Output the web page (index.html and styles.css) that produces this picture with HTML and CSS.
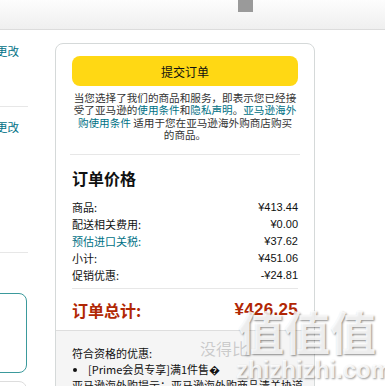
FILE: index.html
```html
<!DOCTYPE html>
<html lang="zh-CN">
<head>
    <meta charset="UTF-8">
    <meta name="viewport" content="width=device-width, initial-scale=1.0">
    <title>提交订单</title>
    <link rel="stylesheet" href="styles.css">
</head>
<body>

    <!-- 顶部栏 -->
    <div class="topbar">
        <div class="top-block"></div>
    </div>

    <div class="page">
        <!-- 左侧 (被裁切的地址/支付区域) -->
        <div class="side">
            <div class="side-inner">
                <div class="side-sec first">
                    <a class="change" href="#">更改</a>
                </div>
                <div class="side-sec second">
                    <a class="change" href="#">更改</a>
                </div>
                <div class="opt selected"></div>
                <div class="opt"></div>
            </div>
        </div>

        <!-- 订单摘要 -->
        <div class="summary">
            <div class="summary-top">
                <button class="submit-btn">提交订单</button>
                <p class="terms">
                    当您选择了我们的商品和服务，即表示您已经接<br>
                    受了亚马逊的<a href="#">使用条件</a>和<a href="#">隐私声明</a>。<a href="#">亚马逊海外<br>
                    购使用条件</a> 适用于您在亚马逊海外购商店购买<br>
                    的商品。
                </p>

                <h2 class="price-title">订单价格</h2>

                <div class="rows">
                    <div class="row"><span>商品:</span><span class="num">¥413.44</span></div>
                    <div class="row"><span>配送相关费用:</span><span class="num">¥0.00</span></div>
                    <div class="row"><a href="#">预估进口关税:</a><span class="num">¥37.62</span></div>
                    <div class="row"><span>小计:</span><span class="num">¥451.06</span></div>
                    <div class="row"><span>促销优惠:</span><span class="num">-¥24.81</span></div>
                </div>

                <div class="total">
                    <span>订单总计:</span>
                    <span class="total-num">¥426.25</span>
                </div>
            </div>

            <div class="summary-bottom">
                <div class="promo-title">符合资格的优惠:</div>
                <ul class="promo-list">
                    <li>[Prime会员专享]满1件售�</li>
                </ul>
                <div class="promo-note">亚马逊海外购提示：亚马逊海外购商品清关协道</div>
            </div>
        </div>
    </div>

    <!-- 水印 -->
    <div class="watermark">
        <div class="wm-big">值值值</div>
        <div class="wm-site">没得比</div>
        <div class="wm-url">zhizhizhi.com</div>
    </div>

</body>
</html>
```

FILE: styles.css
```css
body, html {
    margin: 0;
    padding: 0;
    height: 100%;
    background: #fff;
    overflow: hidden;
    font-family: "Liberation Sans", "Noto Sans CJK SC", sans-serif;
    color: #0f1111;
}

a {
    color: #007185;
    text-decoration: none;
}

/* 顶部栏 */
.topbar {
    height: 29px;
    background: linear-gradient(#fdfdfd, #efefef);
    border-bottom: 1px solid #dcdcdc;
}

.top-block {
    width: 15px;
    height: 12px;
    margin-left: 238px;
    background: #9a9a9a;
}

.page {
    display: flex;
    align-items: flex-start;
}

/* 左侧 */
.side {
    width: 28px;
    overflow: hidden;
    flex-shrink: 0;
}

.side-inner {
    width: 240px;
    margin-left: -212px;
}

.side-sec {
    border-bottom: 1px solid #e7e7e7;
    text-align: right;
    padding-right: 9px;
}

.side-sec.first {
    padding-top: 14px;
    height: 62px;
}

.side-sec.second {
    padding-top: 13px;
    height: 132px;
}

.change {
    display: block;
    font-size: 11.5px;
    line-height: 16px;
}

.opt {
    height: 78px;
    border: 1px solid #dddddd;
    border-radius: 8px;
    margin-right: 1px;
    margin-top: 8px;
}

.opt.selected {
    margin-top: 40px;
    border-color: #3b9a9c;
}

/* 订单摘要卡片 */
.summary {
    width: 258px;
    margin-top: 13px;
    margin-left: 27px;
    border: 1px solid #d5d9d9;
    border-radius: 8px;
    overflow: hidden;
    flex-shrink: 0;
}

.summary-top {
    padding: 12px 16px 9px;
}

.submit-btn {
    display: block;
    width: 100%;
    height: 30px;
    border: none;
    border-radius: 8px;
    background: #ffd814;
    font-family: "Noto Sans CJK SC", sans-serif;
    font-size: 12px;
    color: #0f1111;
    padding: 0;
}

.terms {
    margin: 6px -2px 0;
    text-align: center;
    font-family: "Noto Sans CJK SC", sans-serif;
    font-size: 10.6px;
    line-height: 12.4px;
    color: #333;
    padding-bottom: 12px;
    border-bottom: 1px solid #e7e7e7;
    white-space: nowrap;
}

.price-title {
    margin: 13px 0 0;
    font-family: "Noto Sans CJK SC", sans-serif;
    font-size: 16px;
    line-height: 20px;
    font-weight: bold;
}

.rows {
    margin-top: 11px;
    padding-bottom: 4px;
    border-bottom: 1px solid #e7e7e7;
}

.row {
    display: flex;
    justify-content: space-between;
    font-size: 11px;
    line-height: 17px;
    color: #0f1111;
}

.row span:first-child,
.row a {
    font-family: "Noto Sans CJK SC", sans-serif;
}

.num {
    font-family: "Liberation Sans", sans-serif;
}

.total {
    display: flex;
    justify-content: space-between;
    align-items: center;
    margin-top: 10px;
    line-height: 22px;
    color: #b12704;
    font-weight: bold;
}

.total span:first-child {
    font-family: "Noto Sans CJK SC", sans-serif;
    font-size: 16px;
}

.total-num {
    font-size: 17px;
    letter-spacing: 0.3px;
}

/* 灰色区域 */
.summary-bottom {
    background: #f5f5f5;
    border-top: 1px solid #dedede;
    padding: 14px 16px 20px;
    font-family: "Noto Sans CJK SC", sans-serif;
    font-size: 11px;
    line-height: 16px;
    color: #111;
    white-space: nowrap;
}

.promo-list {
    margin: 0;
    padding-left: 16px;
}

.promo-list li {
    padding-left: 0;
}

/* 水印 */
.watermark {
    position: absolute;
    left: 200px;
    top: 302px;
    width: 185px;
    height: 84px;
    pointer-events: none;
}

.wm-big {
    position: absolute;
    left: 38px;
    top: 0;
    font-family: "Noto Sans CJK SC", sans-serif;
    font-size: 46px;
    line-height: 56px;
    font-weight: bold;
    color: rgba(255, 255, 255, 0.85);
    text-shadow: 1px 1px 2px rgba(0, 0, 0, 0.45);
}

.wm-site {
    position: absolute;
    left: 0;
    top: 34px;
    font-family: "Noto Sans CJK SC", sans-serif;
    font-size: 16px;
    color: rgba(150, 150, 150, 0.45);
}

.wm-url {
    position: absolute;
    left: 36px;
    top: 54px;
    font-family: "Liberation Sans", sans-serif;
    font-size: 24px;
    font-weight: bold;
    color: rgba(255, 255, 255, 0.85);
    text-shadow: 1px 1px 2px rgba(0, 0, 0, 0.4);
}
```
